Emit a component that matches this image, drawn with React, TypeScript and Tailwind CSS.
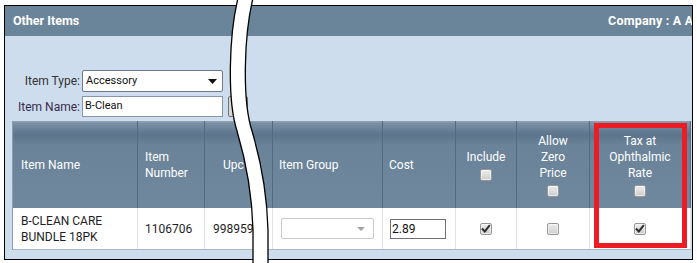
import React from "react";

function Check({ checked = false }: { checked?: boolean }) {
  return (
    <span className="relative inline-block w-[12px] h-[12px] rounded-[2px] border border-[#979797] bg-[linear-gradient(to_bottom,#ececec,#cdcdcd)] shadow-[inset_0_0_0_1px_rgba(255,255,255,0.55)]">
      {checked && (
        <svg width="12" height="12" viewBox="0 0 12 12" className="absolute left-[-1px] top-[-1px]">
          <path d="M2.6 6.2 L4.8 8.4 L9.2 2.8" fill="none" stroke="#2e2e2e" strokeWidth="2" strokeLinecap="square" />
        </svg>
      )}
    </span>
  );
}

const cols = "grid grid-cols-[125px_67px_68px_110px_73px_61px_73px_101px]";

export default function App() {
  return (
    <div className="relative w-[697px] h-[263px] bg-white overflow-hidden font-['Roboto','Open_Sans',sans-serif] text-[12px]">
      <div className="ml-[4px] mt-[5px] w-[689px] h-[255px] border border-black flex flex-col overflow-hidden">
        <div className="h-[30px] shrink-0 bg-[#6a8499] flex items-center pl-[8px] text-white font-bold text-[12.5px]">
          <span>Other Items</span>
          <span className="ml-auto w-[84px] whitespace-nowrap overflow-hidden tracking-[0.2px]">Company : A A</span>
        </div>
        <div className="flex-1 bg-[#cedded] pl-[7px] pt-[34px]">
          <div className="flex items-center h-[22px]">
            <span className="w-[68px] text-right text-[#333]">Item Type:</span>
            <div className="ml-[2px] w-[141px] h-[22px] bg-white border border-[#6d7b89] rounded-[2px] flex items-center pl-[3px] pr-[5px] text-[11px] text-[#111]">
              <span>Accessory</span>
              <svg width="9" height="5" viewBox="0 0 9 5" className="ml-auto">
                <path d="M0 0 L9 0 L4.5 5 Z" fill="#111" />
              </svg>
            </div>
          </div>
          <div className="mt-[4px] flex items-center h-[21px]">
            <span className="w-[68px] text-right text-[#3a2c4e]">Item Name:</span>
            <div className="ml-[2px] w-[141px] h-[21px] bg-white border border-[#8796a6] flex items-center pl-[2px] text-[11px] text-[#111]">
              B-Clean
            </div>
            <div className="ml-[5px] w-[20px] h-[21px] bg-[#d8d8d8] border border-[#707070] rounded-[2px]" />
          </div>
          <div className="mt-[4px] w-[679px] border-l border-[#8a9db0]">
            <div
              className={`${cols} h-[87px] text-white leading-[16px] bg-[linear-gradient(to_bottom,#93a6b8_0px,#7b91a6_2px,#5b748b_14px,#6a8399_24px,#6f889e_100%)]`}
            >
              <div className="border-r border-[#536b81] flex items-center pl-[8px]">Item Name</div>
              <div className="border-r border-[#536b81] flex items-center pl-[7px]">
                <span>
                  Item
                  <br />
                  Number
                </span>
              </div>
              <div className="border-r border-[#536b81] flex items-center pl-[18px]">Upc</div>
              <div className="border-r border-[#536b81] flex items-center pl-[6px]">Item Group</div>
              <div className="border-r border-[#536b81] flex items-center pl-[6px]">Cost</div>
              <div className="border-r border-[#536b81] flex flex-col items-center justify-center text-center">
                <span>Include</span>
                <span className="mt-[4px] flex">
                  <Check />
                </span>
              </div>
              <div className="border-r border-[#536b81] flex flex-col items-center justify-center text-center">
                <span>
                  Allow
                  <br />
                  Zero
                  <br />
                  Price
                </span>
                <span className="mt-[4px] flex">
                  <Check />
                </span>
              </div>
              <div className="border-r border-[#536b81] flex flex-col items-center justify-center text-center">
                <span>
                  Tax at
                  <br />
                  Ophthalmic
                  <br />
                  Rate
                </span>
                <span className="mt-[4px] flex">
                  <Check />
                </span>
              </div>
            </div>
            <div className={`${cols} h-[42px] bg-white border-b border-[#a9b8c7] text-[#1e1e1e] leading-[16px]`}>
              <div className="border-r border-[#dde3e9] flex items-center pl-[8px]">
                <span>
                  B-CLEAN CARE
                  <br />
                  BUNDLE 18PK
                </span>
              </div>
              <div className="border-r border-[#dde3e9] flex items-center pl-[7px]">1106706</div>
              <div className="border-r border-[#dde3e9] flex items-center pl-[8px] whitespace-nowrap overflow-hidden">9989591</div>
              <div className="border-r border-[#dde3e9] flex items-center pl-[8px]">
                <div className="w-[93px] h-[21px] border border-[#c9c9c9] rounded-[2px] bg-white flex items-center pr-[8px]">
                  <svg width="8" height="4" viewBox="0 0 8 4" className="ml-auto">
                    <path d="M0 0 L8 0 L4 4 Z" fill="#a3a3a3" />
                  </svg>
                </div>
              </div>
              <div className="border-r border-[#dde3e9] flex items-center pl-[7px]">
                <div className="w-[56px] h-[20px] border border-[#707070] bg-white flex items-center pl-[1px] text-[12px] text-[#111]">2.89</div>
              </div>
              <div className="border-r border-[#dde3e9] flex items-center justify-center">
                <Check checked />
              </div>
              <div className="border-r border-[#dde3e9] flex items-center justify-center">
                <Check />
              </div>
              <div className="border-r border-[#dde3e9] flex items-center justify-center">
                <Check checked />
              </div>
            </div>
          </div>
        </div>
      </div>

      <div className="absolute left-[594px] top-[123px] w-[93px] h-[125px] border-[5px] border-[#ed1c24]" />

      <svg className="absolute left-0 top-0 pointer-events-none" width="697" height="263" viewBox="0 0 697 263">
        <path
          d="M238,-2 C229,35 227,100 237,131 C245,158 252,190 253,230 L253,265 L268,265 L268,230 C267,190 260,158 252,131 C242,100 244,35 253,-2 Z"
          fill="#ffffff"
        />
        <path d="M238,-2 C229,35 227,100 237,131 C245,158 252,190 253,230 L253,265" fill="none" stroke="#000" strokeWidth="1.3" />
        <path d="M253,-2 C244,35 242,100 252,131 C260,158 267,190 268,230 L268,265" fill="none" stroke="#000" strokeWidth="1.3" />
      </svg>
    </div>
  );
}
